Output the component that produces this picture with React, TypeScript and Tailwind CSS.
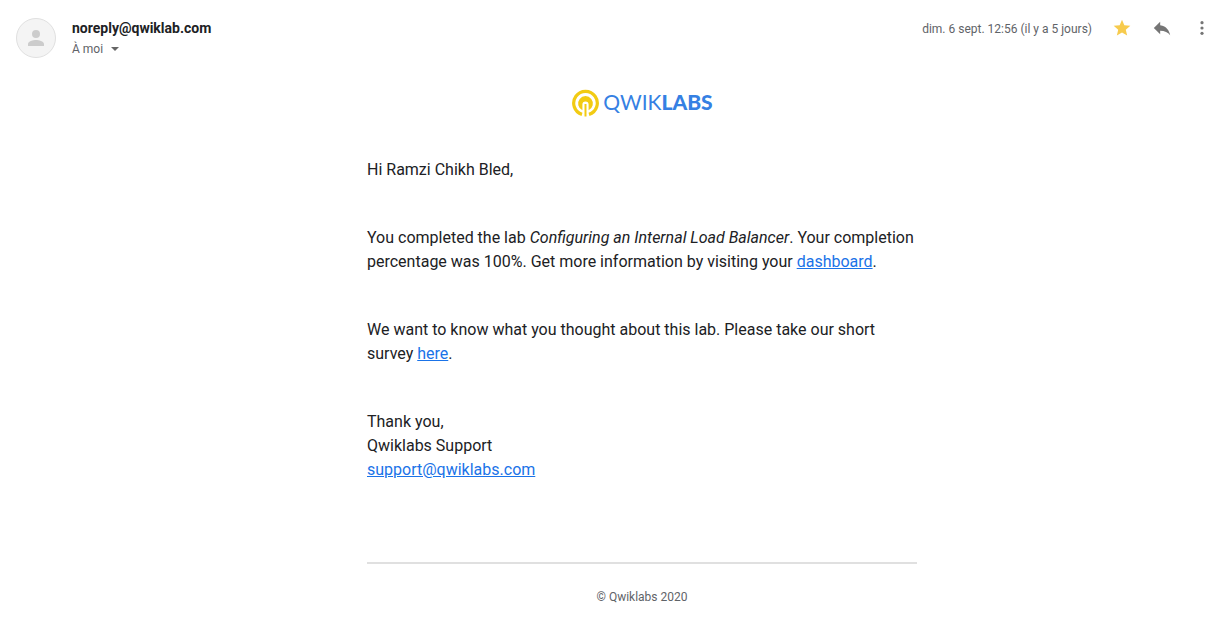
import React from "react";

function Logo() {
  return (
    <a href="#qwiklabs" aria-label="Qwiklabs" className="flex items-start gap-1">
      <svg width="28" height="28" viewBox="0 0 28 28" fill="none" aria-hidden="true">
        <path d="M11 25.4A11.800 11.800 0 1 1 18 25.4" stroke="#f2cb13" strokeWidth="3.2" />
        <path
          d="M11.400 21.200A7.400 7.400 0 1 1 17.600 21.200V15.600A3.100 3.100 0 0 0 11.400 15.600Z"
          fill="#f2cb13"
        />
        <path d="M13.500 15H15.500V27.500H13.500Z" fill="#f2cb13" />
      </svg>
      <span className="font-[Lato] text-[21px] leading-[26px] text-[#3580e3]">
        QWIK<b className="font-black">LABS</b>
      </span>
    </a>
  );
}

function MessageHeader() {
  return (
    <header className="flex items-start gap-4">
      <div className="mt-0.5 flex size-10 shrink-0 items-center justify-center rounded-full border border-[#e0e0e0] bg-[#f4f4f4]">
        <svg width="24" height="24" viewBox="0 0 24 24" fill="#cccccc" aria-hidden="true">
          <path d="M12 12a4 4 0 1 0 0-8 4 4 0 0 0 0 8zm0 2c-2.700 0-8 1.300-8 4v2h16v-2c0-2.700-5.300-4-8-4z" />
        </svg>
      </div>
      <div className="grow">
        <h1 className="pt-0.5 text-sm font-bold leading-5 text-[#202124]">noreply@qwiklab.com</h1>
        <button type="button" className="flex items-center gap-0.5 text-xs leading-[22px] text-[#5f6368]">
          À moi
          <svg width="20" height="20" viewBox="0 0 20 20" fill="#666666" aria-hidden="true">
            <path d="M6 8h8l-4 4z" />
          </svg>
        </button>
      </div>
      <div className="flex h-6 items-center gap-5">
        <time dateTime="2020-09-06T12:56" className="pt-0.5 text-xs text-[#5f6368]">
          dim. 6 sept. 12:56 (il y a 5 jours)
        </time>
        <button type="button" aria-label="Suivi">
          <svg width="20" height="20" viewBox="0 0 24 24" fill="#f7cb4d" aria-hidden="true">
            <path d="M12 17.270 18.180 21l-1.640-7.030L22 9.240l-7.190-.61L12 2 9.190 8.630 2 9.240l5.460 4.730L5.820 21z" />
          </svg>
        </button>
        <button type="button" aria-label="Répondre">
          <svg width="20" height="20" viewBox="1 1 22 22" fill="#757575" aria-hidden="true">
            <path d="M10 9V5l-7 7 7 7v-4.100c5 0 8.500 1.600 11 5.100-1-5-4-10-11-11z" />
          </svg>
        </button>
        <button type="button" aria-label="Plus">
          <svg width="20" height="20" viewBox="0 0 20 20" fill="#757575" aria-hidden="true">
            <circle cx="10" cy="4.700" r="1.600" />
            <circle cx="10" cy="10" r="1.600" />
            <circle cx="10" cy="15.300" r="1.600" />
          </svg>
        </button>
      </div>
    </header>
  );
}

const link = "text-[#1a73e8] underline";

export default function App() {
  return (
    <main className="bg-white pl-4 pr-[13px] pt-4 font-[Roboto,sans-serif]">
      <MessageHeader />
      <article className="ml-14 flex flex-col items-center pt-[29px]">
        <Logo />
        <div className="mt-[41px] flex w-full max-w-[550px] flex-col gap-11 text-base leading-6 text-[#202124]">
          <p>Hi Ramzi Chikh Bled,</p>
          <p>
            You completed the lab <i>Configuring an Internal Load Balancer</i>. Your completion percentage was 100%.
            Get more information by visiting your <a href="#dashboard" className={link}>dashboard</a>.
          </p>
          <p>
            We want to know what you thought about this lab. Please take our short survey{" "}
            <a href="#survey" className={link}>here</a>.
          </p>
          <p>
            Thank you,
            <br />
            Qwiklabs Support
            <br />
            <a href="mailto:support@qwiklabs.com" className={link}>support@qwiklabs.com</a>
          </p>
        </div>
        <footer className="mt-20 w-full max-w-[550px] border-t-2 border-[#e0e0e0] pt-[23px] text-center text-xs leading-5 text-[#5f6368]">
          © Qwiklabs 2020
        </footer>
      </article>
    </main>
  );
}
